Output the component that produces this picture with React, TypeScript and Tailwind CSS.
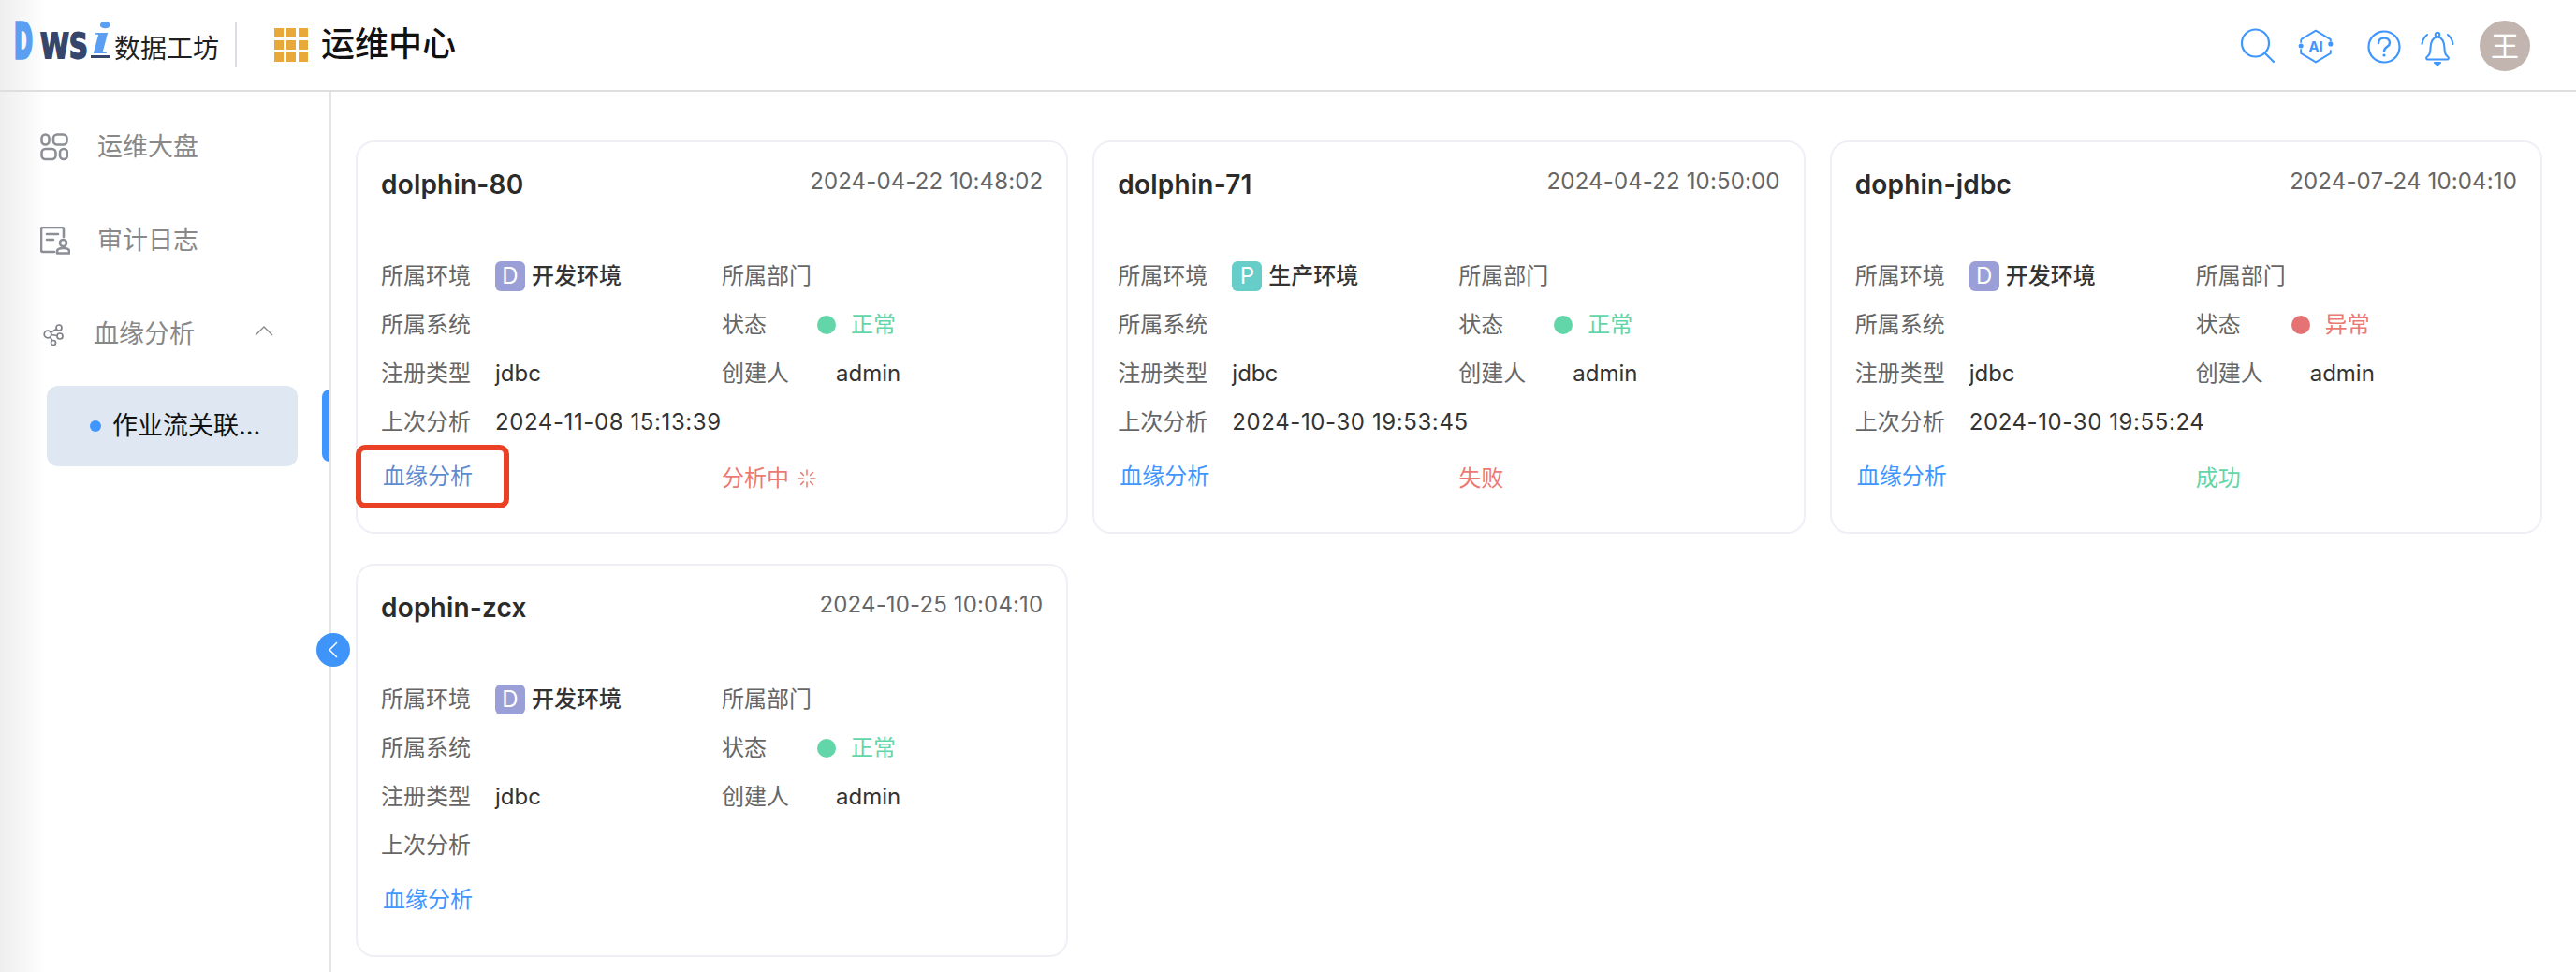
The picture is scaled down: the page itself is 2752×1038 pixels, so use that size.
import React from "react";

type CardData = {
  name: string;
  date: string;
  env: "D" | "P";
  ok: boolean;
  last?: string;
  result?: "running" | "fail" | "success";
  boxed?: boolean;
};

const cards: CardData[] = [
  { name: "dolphin-80", date: "2024-04-22 10:48:02", env: "D", ok: true, last: "2024-11-08 15:13:39", result: "running", boxed: true },
  { name: "dolphin-71", date: "2024-04-22 10:50:00", env: "P", ok: true, last: "2024-10-30 19:53:45", result: "fail" },
  { name: "dophin-jdbc", date: "2024-07-24 10:04:10", env: "D", ok: false, last: "2024-10-30 19:55:24", result: "success" },
  { name: "dophin-zcx", date: "2024-10-25 10:04:10", env: "D", ok: true },
];

function Logo() {
  return (
    <svg width="106" height="44" viewBox="0 0 106 44" className="shrink-0 overflow-visible">
      <text x="1" y="39.500" textLength="20" lengthAdjust="spacingAndGlyphs" fontFamily="DejaVu Sans" fontWeight="700" fontSize="52" fill="#5a9ff2" stroke="#5a9ff2" strokeWidth="3.500">D</text>
      <text x="29" y="40" textLength="51" lengthAdjust="spacingAndGlyphs" fontFamily="DejaVu Sans" fontWeight="700" fontSize="38" fill="#36456b" stroke="#36456b" strokeWidth="1.800">WS</text>
      <text x="84" y="35" textLength="20" lengthAdjust="spacingAndGlyphs" fontFamily="Liberation Serif" fontStyle="italic" fontWeight="700" fontSize="48" fill="#5a9ff2">i</text>
      <rect x="83" y="37" width="21" height="3" fill="#36456b" />
    </svg>
  );
}

function GridIcon() {
  return (
    <div className="grid grid-cols-3 gap-[3px] w-9 h-9 shrink-0">
      {Array.from({ length: 9 }).map((_, i) => (
        <div key={i} className="bg-[#e8a93a]" />
      ))}
    </div>
  );
}

function SearchIcon() {
  return (
    <svg width="38" height="38" viewBox="0 0 38 38" fill="none" stroke="#4096ff" strokeWidth="2.200" strokeLinecap="round">
      <circle cx="16.500" cy="16" r="14.500" />
      <path d="M27 27l9 9" />
    </svg>
  );
}

function AiIcon() {
  return (
    <svg width="38" height="38" viewBox="2 1 34 36" fill="none" stroke="#4096ff" strokeWidth="1.800">
      <path d="M4 12.500 19 3.500l15 9v2M34 23v3.500l-15 9-15-9V22M4 16v-3.500" strokeLinejoin="round" />
      <circle cx="4" cy="19" r="2.400" fill="#4096ff" stroke="none" />
      <circle cx="34" cy="17" r="2.400" fill="#4096ff" stroke="none" />
      <text x="19" y="24.500" textAnchor="middle" fontFamily="Inter" fontWeight="700" fontSize="14" fill="#4096ff" stroke="none">AI</text>
    </svg>
  );
}

function HelpIcon() {
  return (
    <svg width="36" height="36" viewBox="0 0 36 36" fill="none" stroke="#4096ff" strokeWidth="2.200" strokeLinecap="round">
      <circle cx="18" cy="18" r="16.500" />
      <path d="M12 14c0-3.500 2.700-5.500 6-5.500s6 2.200 6 5.200c0 4.500-6 4.300-6 9" strokeWidth="2.500" />
      <circle cx="18" cy="27" r="1.600" fill="#4096ff" stroke="none" />
    </svg>
  );
}

function BellIcon() {
  return (
    <svg width="36" height="38" viewBox="0 0 36 38" fill="none" stroke="#4096ff" strokeWidth="2.100" strokeLinecap="round" strokeLinejoin="round">
      <path d="M7 28.500c3-2 3.500-5 3.500-9 0-7 3-12 7.500-12s7.500 5 7.500 12c0 4 .5 7 3.500 9 1.500 1 1 3-.8 3H7.800c-1.800 0-2.300-2-.8-3z" />
      <circle cx="18" cy="5" r="2.300" />
      <path d="M1.500 15C2 11 4 7.500 7 5M34.500 15c-.5-4-2.500-7.500-5.500-10" />
      <path d="M15 35h6l-3 2.500z" fill="#4096ff" />
    </svg>
  );
}

function DashboardIcon() {
  return (
    <svg width="30" height="30" viewBox="0 0 30 30" fill="none" stroke="#8c8f96" strokeWidth="2.600">
      <rect x="1.500" y="1.500" width="8" height="11" rx="4" />
      <rect x="14" y="1.500" width="14.500" height="11" rx="4" />
      <rect x="1.500" y="17" width="15" height="11" rx="4" />
      <rect x="21" y="17" width="8" height="11" rx="4" />
    </svg>
  );
}

function AuditIcon() {
  return (
    <svg width="32" height="30" viewBox="0 0 32 30" fill="none" stroke="#8c8f96" strokeWidth="2.600" strokeLinecap="round" strokeLinejoin="round">
      <path d="M15 27H3a2 2 0 0 1-2-2V3a2 2 0 0 1 2-2h20a2 2 0 0 1 2 2v8" />
      <path d="M7 8h12M7 14h7" />
      <circle cx="24.500" cy="17.500" r="3.500" />
      <path d="M18 28.500v-2c0-2 2-3.500 6.500-3.500s6.500 1.500 6.500 3.500v2z" />
    </svg>
  );
}

function LineageIcon() {
  return (
    <svg width="22" height="24" viewBox="0 0 22 24" fill="none" stroke="#7f8288" strokeWidth="1.700">
      <circle cx="5" cy="12" r="3.800" />
      <circle cx="17" cy="5" r="3" />
      <circle cx="18" cy="14" r="3" />
      <circle cx="11" cy="21" r="2.500" />
      <path d="M8.300 10l6-3.500M8.800 12.500l6.200 1M7.500 15l2.500 4" />
    </svg>
  );
}

function Spinner() {
  const rays = [0, 45, 90, 135, 180, 225, 270, 315];
  return (
    <svg width="22" height="22" viewBox="0 0 22 22" stroke="#ec7a72" strokeWidth="1.500" strokeLinecap="round">
      {rays.map((r) => (
        <line key={r} x1="11" y1="2" x2="11" y2={r % 90 === 0 ? 7 : 6} transform={`rotate(${r} 11 11)`} />
      ))}
    </svg>
  );
}

function Label({ children, w = "w-[122px]" }: { children: React.ReactNode; w?: string }) {
  return <div className={`${w} shrink-0 text-[#666666]`}>{children}</div>;
}

function Row({ children }: { children: React.ReactNode }) {
  return <div className="flex h-[52px] items-center">{children}</div>;
}

function Card({ c }: { c: CardData }) {
  return (
    <div className="relative h-[420px] rounded-[20px] border-2 border-[#eef0f6] bg-white px-[25px] pt-[25px] text-[24px] text-[#333333]">
      <div className="flex h-[34px] items-start justify-between">
        <div className="text-[28px] leading-[40px] font-semibold tracking-[0.2px] text-[#2b2b2b]">{c.name}</div>
        <div className="leading-[34px] tracking-[0.15px] text-[#666666]">{c.date}</div>
      </div>
      <div className="mt-[58px] grid grid-cols-[364px_1fr]">
        <Row>
          <Label>所属环境</Label>
          <div className={`flex h-8 w-8 items-center justify-center rounded-md text-white ${c.env === "D" ? "bg-[#9b9fd8]" : "bg-[#66cdc8]"}`}>{c.env}</div>
          <div className="ml-[7px] font-medium">{c.env === "D" ? "开发环境" : "生产环境"}</div>
        </Row>
        <Row>
          <Label>所属部门</Label>
        </Row>
        <Row>
          <Label>所属系统</Label>
        </Row>
        <Row>
          <Label w="w-[102px]">状态</Label>
          <div className={`h-5 w-5 rounded-full ${c.ok ? "bg-[#62d6a8]" : "bg-[#e57373]"}`} />
          <div className={`ml-4 ${c.ok ? "text-[#62d6a8]" : "text-[#ec7a72]"}`}>{c.ok ? "正常" : "异常"}</div>
        </Row>
        <Row>
          <Label>注册类型</Label>
          <div>jdbc</div>
        </Row>
        <Row>
          <Label>创建人</Label>
          <div>admin</div>
        </Row>
        <Row>
          <Label>上次分析</Label>
          <div className="whitespace-nowrap tracking-[0.6px]">{c.last}</div>
        </Row>
        <Row>{null}</Row>
      </div>
      <div className="mt-[6px] grid grid-cols-[364px_1fr]">
        <div className={`pl-[2px] leading-[52px] ${c.boxed ? "text-[#5f8bd0]" : "text-[#4096ff]"}`}>血缘分析</div>
        <div className="flex h-[52px] translate-y-[2px] items-center gap-2">
          {c.result === "running" && (
            <>
              <span className="text-[#ec7a72]">分析中</span>
              <Spinner />
            </>
          )}
          {c.result === "fail" && <span className="text-[#ec7a72]">失败</span>}
          {c.result === "success" && <span className="text-[#62d6a8]">成功</span>}
        </div>
      </div>
      {c.boxed && <div className="absolute left-[-2px] top-[323px] h-[68px] w-[164px] rounded-[10px] border-[6px] border-[#ea4124]" />}
    </div>
  );
}

function NavItem({ icon, label }: { icon: React.ReactNode; label: string }) {
  return (
    <div className="flex h-[100px] items-center text-[27px] text-[#888888]">
      <div className="flex w-[61px] shrink-0 justify-start">{icon}</div>
      <span>{label}</span>
    </div>
  );
}

export default function App() {
  return (
    <div className="flex h-screen w-full flex-col overflow-hidden bg-white font-['Inter','Noto_Sans_CJK_SC',sans-serif]">
      <header className="flex h-[98px] shrink-0 items-center border-b-2 border-[#dedede] bg-[linear-gradient(90deg,#eeeeee,#ffffff_50px)] pl-[14px] pr-[49px]">
        <div className="-mt-2">
          <Logo />
        </div>
        <div className="ml-[2px] mt-1 text-[28px] leading-[36px] whitespace-nowrap text-[#1f1f1f] font-['Noto_Sans_CJK_SC',sans-serif]">数据工坊</div>
        <div className="ml-[17px] h-12 w-[2px] bg-[#dcdce2]" />
        <div className="ml-10">
          <GridIcon />
        </div>
        <div className="ml-[14px] -mt-[2px] text-[36px] leading-[44px] font-medium text-[#111111]">运维中心</div>
        <div className="ml-auto mt-[2px] flex items-center">
          <SearchIcon />
          <div className="ml-[24px]">
            <AiIcon />
          </div>
          <div className="ml-[36px] mt-[2px]">
            <HelpIcon />
          </div>
          <div className="ml-[21px] mt-[4px]">
            <BellIcon />
          </div>
          <div className="ml-[27px] flex h-[54px] w-[54px] items-center justify-center rounded-full bg-[#c2b5af] text-[30px] text-white">王</div>
        </div>
      </header>
      <div className="flex min-h-0 flex-1">
        <aside className="relative w-[354px] shrink-0 border-r-2 border-[#e5e5e8] bg-[linear-gradient(90deg,#eeeeee,#ffffff_50px)] pl-[43px] pt-[9px]">
          <NavItem icon={<DashboardIcon />} label="运维大盘" />
          <NavItem icon={<AuditIcon />} label="审计日志" />
          <div className="flex h-[100px] items-center text-[27px] text-[#888888]">
            <div className="flex w-[57px] shrink-0 pl-[3px]">
              <LineageIcon />
            </div>
            <span>血缘分析</span>
            <svg width="20" height="12" viewBox="0 0 20 12" fill="none" stroke="#888888" strokeWidth="1.300" className="ml-[64px] -mt-2">
              <path d="M1 11 10 2l9 9" />
            </svg>
          </div>
          <div className="ml-[7px] mt-[5px] flex h-[86px] w-[268px] items-center rounded-[12px] bg-[#dfe8f2] pl-[46px] text-[27px] text-[#111111]">
            <div className="h-3 w-3 rounded-full bg-[#4096ff]" />
            <span className="ml-3 whitespace-nowrap">作业流关联...</span>
          </div>
          <div className="absolute right-0 top-[318px] h-[77px] w-2 rounded-l-lg bg-[#4096ff]" />
          <div className="absolute left-[338px] top-[578px] z-10 flex h-9 w-9 items-center justify-center rounded-full bg-[#3f94f9]">
            <svg width="12" height="20" viewBox="0 0 12 20" fill="none" stroke="#ffffff" strokeWidth="1.500">
              <path d="M10 2 2 10l8 8" />
            </svg>
          </div>
        </aside>
        <main className="min-w-0 flex-1 overflow-hidden pl-[26px] pr-[36px] pt-[52px]">
          <div className="grid grid-cols-3 items-start gap-x-[26px] gap-y-[32px]">
            {cards.map((c) => (
              <Card key={c.name} c={c} />
            ))}
          </div>
        </main>
      </div>
    </div>
  );
}
